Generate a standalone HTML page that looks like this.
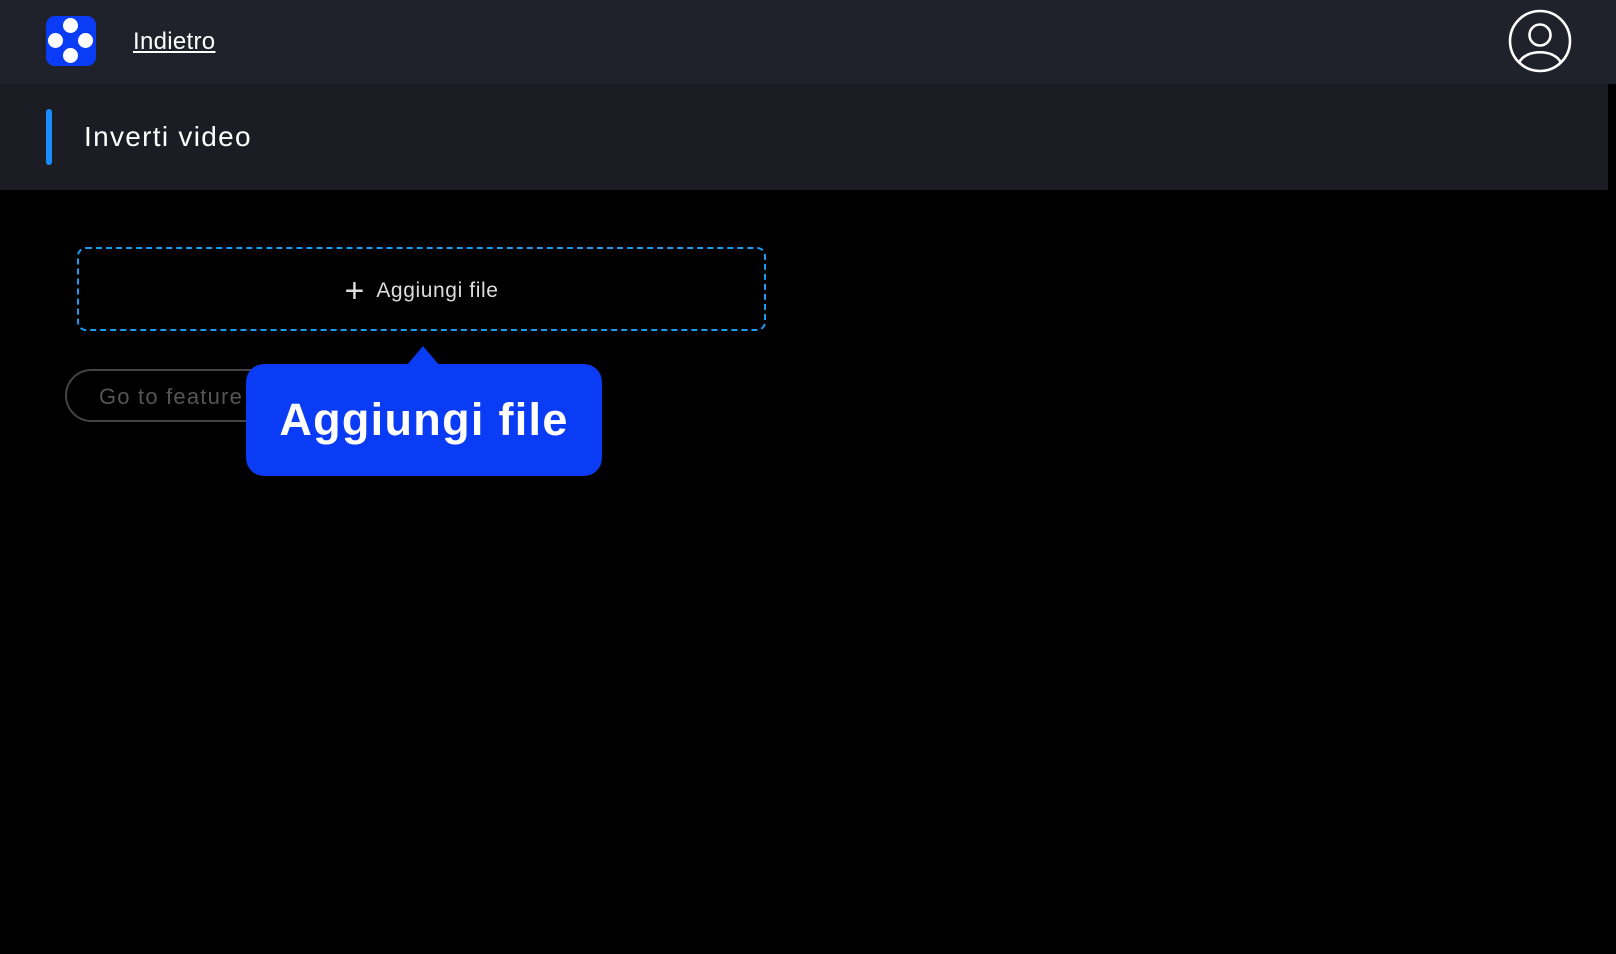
<!DOCTYPE html>
<html><head><meta charset="utf-8"><style>
body{margin:0;width:1616px;height:954px;background:#000;overflow:hidden;font-family:"Liberation Sans",sans-serif;position:relative}
.hdr{position:absolute;left:0;top:0;width:1616px;height:84px;background:#1f212b}
.sub{position:absolute;left:0;top:84px;width:1608px;height:106px;background:#1c1d24}
.bar{position:absolute;left:46px;top:109px;width:6px;height:56px;border-radius:3px;background:#1a8cff}
.title{position:absolute;left:84px;top:119px;color:#fff;font-size:28px;line-height:36px;letter-spacing:1.3px}
.logo{position:absolute;left:46px;top:16px;width:50px;height:50px;border-radius:9px;background:#0a3cf5}
.logo i{position:absolute;width:15px;height:15px;border-radius:50%;background:#fff}
.back{position:absolute;left:133px;top:28px;color:#fff;font-size:24px;text-decoration:underline;letter-spacing:0.3px}
.box{position:absolute;left:77px;top:247px;width:685px;height:80px;border:2px dashed #1a9cf0;border-radius:9px}
.box span{position:absolute;left:0;right:0;top:23px;text-align:center;color:#ddd;font-size:21px;letter-spacing:0.6px}
.go{position:absolute;left:65px;top:369px;width:240px;height:53px;border:2px solid #444;border-radius:28px;color:#555;font-size:22px;letter-spacing:1.2px;box-sizing:border-box;padding:13px 0 0 32px;white-space:nowrap;overflow:hidden}
.tip{position:absolute;left:246px;top:364px;width:356px;height:112px;background:#0a3cf5;border-radius:18px;color:#fff;font-weight:bold;font-size:45px;letter-spacing:1.3px;text-align:center;line-height:112px}
.arr{position:absolute;left:407px;top:346px;width:0;height:0;border-left:16px solid transparent;border-right:16px solid transparent;border-bottom:19px solid #0a3cf5}
</style></head><body>
<div class="hdr"></div>
<div class="logo"><i style="left:17px;top:2px"></i><i style="left:2px;top:17px"></i><i style="left:32px;top:17px"></i><i style="left:17px;top:32px"></i></div>
<div class="back">Indietro</div>
<svg style="position:absolute;left:1508px;top:9px" width="64" height="64" viewBox="0 0 64 64" fill="none" stroke="#fff" stroke-width="2.6"><circle cx="32" cy="32" r="30"/><circle cx="32" cy="26" r="10.5"/><path d="M11.5 53 C18 40 46 40 52.5 53"/></svg>
<div class="sub"></div><div class="bar"></div><div class="title">Inverti video</div>
<div class="box"><span><span style="position:static;font-size:34px;font-weight:300;vertical-align:-5px;margin-right:12px;letter-spacing:0">+</span>Aggiungi file</span></div>
<div class="go">Go to feature</div>
<div class="arr"></div>
<div class="tip">Aggiungi file</div>
</body></html>
